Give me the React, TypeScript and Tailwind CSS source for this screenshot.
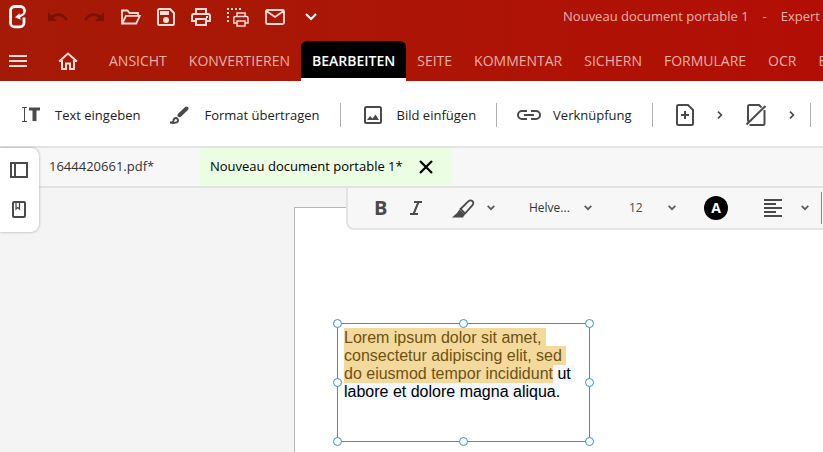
import type { ReactNode } from "react";

function Icon({ w, h, className = "", children }: { w: number; h: number; className?: string; children: ReactNode }) {
  return (
    <svg
      width={w}
      height={h}
      viewBox={`0 0 ${w} ${h}`}
      fill="none"
      stroke="currentColor"
      strokeWidth={2}
      className={`shrink-0 ${className}`}
      aria-hidden="true"
    >
      {children}
    </svg>
  );
}

const Logo = () => (
  <Icon w={18} h={24} className="text-white">
    <path
      strokeWidth={2.8}
      d="M15 12.500V17.800a4 4 0 0 1-4 4H5.500a4 4 0 0 1-4-4V5.500A4 4 0 0 1 5.500 1.500h6A4 4 0 0 1 15.500 5.500V6.500"
    />
    <path strokeWidth={2.2} d="M15.800 6c0 3-2.300 4.500-6.500 5.800" />
    <path d="M6 12.200l4.500-4 1.200 6.600z" fill="currentColor" stroke="none" />
  </Icon>
);

const Undo = () => (
  <Icon w={20} h={10}>
    <path d="M0 0v9h9L5.700 5.700C8.500 3.200 14 2.800 17.600 8.600L20 7.700C15.500-.2 8 .2 3.600 3.600z" fill="currentColor" stroke="none" />
  </Icon>
);

const Redo = () => (
  <Icon w={20} h={10}>
    <path d="M20 0v9h-9l3.300-3.300C11.500 3.200 6 2.800 2.400 8.600L0 7.700C4.500-.2 12 .2 16.400 3.600z" fill="currentColor" stroke="none" />
  </Icon>
);

const FolderOpen = () => (
  <Icon w={20} h={16}>
    <path strokeWidth={1.800} d="M1 14.500V1.500h5.500l2 2.500H17v3M1.200 14.500L5 6.800h13.800l-3.600 7.700z" />
  </Icon>
);

const Save = () => (
  <Icon w={18} h={18}>
    <path d="M1 2.500Q1 1 2.500 1H13l4 4v10.500q0 1.500-1.500 1.500h-13Q1 17 1 15.500z" />
    <path d="M3 3h9v4H3z" fill="currentColor" stroke="none" />
    <circle cx={9} cy={12} r={3} fill="currentColor" stroke="none" />
  </Icon>
);

const Printer = () => (
  <Icon w={20} h={18}>
    <path d="M5 5V1h10v4M5 13H1V8q0-2 2-2h14q2 0 2 2v5h-4M5 11h10v6H5z" />
    <path d="M15 8h2v2h-2z" fill="currentColor" stroke="none" />
  </Icon>
);

const PrintArea = () => (
  <Icon w={22} h={19}>
    <path d="M0 1h14" strokeDasharray="2 2" />
    <path d="M1 4v12" strokeDasharray="2 2" />
    <path strokeWidth={1.500} d="M10 8V5h8v3M10 15H6.800v-5q0-1.500 1.500-1.500h11.200q1.500 0 1.500 1.500v5H18M10 13h8v5h-8z" />
  </Icon>
);

const Mail = () => (
  <Icon w={20} h={16}>
    <path strokeWidth={1.800} d="M1 2.500Q1 1 2.500 1h15Q19 1 19 2.500v11q0 1.500-1.500 1.500h-15Q1 15 1 13.500zM2 2.500l8 5.500 8-5.500" />
  </Icon>
);

const ChevronDown = ({ big = false }: { big?: boolean }) =>
  big ? (
    <Icon w={12} h={8}>
      <path d="M1 1l5 5 5-5" />
    </Icon>
  ) : (
    <Icon w={8} h={6} className="text-[#5c5c5c]">
      <path strokeWidth={1.700} d="M.700 .800L4 4.200 7.300.800" />
    </Icon>
  );

const ChevronRight = () => (
  <Icon w={6} h={8}>
    <path strokeWidth={1.700} d="M1 .700L4.400 4 1 7.300" />
  </Icon>
);

const Menu = () => (
  <Icon w={18} h={12}>
    <path d="M0 1h18M0 6h18M0 11h18" />
  </Icon>
);

const Home = () => (
  <Icon w={20} h={18}>
    <path d="M1 9.500l9-8 9 8M4 8v9h4v-5.500h4V17h4V8" />
  </Icon>
);

const TextInsert = () => (
  <Icon w={18} h={15}>
    <path strokeWidth={1} d="M0 .5h5M2.500 1v13M0 14.500h5" />
    <path strokeWidth={3} d="M7 2h11" />
    <path strokeWidth={4} d="M12.500 2v12" />
  </Icon>
);

const Brush = () => (
  <Icon w={19} h={18}>
    <path strokeWidth={4} strokeLinecap="round" d="M9.500 9.200L16.500 2.500" />
    <path d="M2 16.500q1.600-.7 1.600-2.200a2.200 2.200 0 1 1 2 2.200Q4 17.500 0 16.500z" />
  </Icon>
);

const Picture = () => (
  <Icon w={18} h={18}>
    <rect x={1} y={1} width={16} height={16} rx={1.500} />
    <path d="M3 14l3-4 2.500 2.500L11.500 8.500 15 14z" fill="currentColor" stroke="none" />
  </Icon>
);

const Link = () => (
  <Icon w={24} h={10}>
    <path d="M10 1H5a4 4 0 0 0 0 8h5M14 1h5a4 4 0 0 1 0 8h-5M7 5h10" />
  </Icon>
);

const PageAdd = () => (
  <Icon w={18} h={22}>
    <path d="M1 2.500Q1 1 2.500 1H12l5 5v13.500q0 1.500-1.500 1.500h-13Q1 21 1 19.500zM5 11h8M9 7v8" />
  </Icon>
);

const PageRemove = () => (
  <Icon w={20} h={22}>
    <path d="M2 17.500V2.500Q2 1 3.500 1H13l2.500 2.500M18.500 6v13.500q0 1.500-1.500 1.500H3.500M.500 20.500L19.500 2" />
  </Icon>
);

const Sidebar = () => (
  <Icon w={18} h={16}>
    <path d="M1 1h16v14H1zM5 1v14" />
  </Icon>
);

const Bookmark = () => (
  <Icon w={14} h={17}>
    <rect x={1} y={1} width={12} height={15} rx={1} />
    <path strokeWidth={1.300} d="M4 1.500V8l1.800-1.500L7.500 8V1.500" />
  </Icon>
);

const Close = () => (
  <Icon w={14} h={14}>
    <path strokeWidth={2.200} d="M1 1l12 12M13 1L1 13" />
  </Icon>
);

const Italic = () => (
  <Icon w={12} h={14}>
    <path d="M4 1h8M0 13h8M8.500 1l-5 12" />
  </Icon>
);

const Highlighter = () => (
  <Icon w={23} h={19}>
    <path strokeWidth={1.800} d="M8.500 10L16.500 2.200q2-1.600 4 0 1.600 1.800 0 4L13 14.500z" />
    <path d="M7.500 10.500l5.500 5-2 3H0l5-4.500z" fill="currentColor" stroke="none" />
  </Icon>
);

const AlignLeft = () => (
  <Icon w={18} h={18}>
    <path d="M0 1h18M0 5h12M0 9h18M0 13h12M0 17h18" />
  </Icon>
);

const quick = [
  { label: "Öffnen", icon: <FolderOpen /> },
  { label: "Speichern", icon: <Save /> },
  { label: "Drucken", icon: <Printer /> },
  { label: "Bereich drucken", icon: <PrintArea /> },
  { label: "E-Mail", icon: <Mail /> },
];

const menus = ["ANSICHT", "KONVERTIEREN", "BEARBEITEN", "SEITE", "KOMMENTAR", "SICHERN", "FORMULARE", "OCR", "E"];

const Divider = ({ className = "" }: { className?: string }) => (
  <span className={`h-6 w-px shrink-0 bg-[#b0b0b0] ${className}`} />
);

function Tool({ icon, label, gap = "gap-[15px]" }: { icon: ReactNode; label: string; gap?: string }) {
  return (
    <button type="button" className={`flex shrink-0 items-center text-[#4a4a4a] ${gap}`}>
      {icon}
      <span className="text-[13px] leading-5 font-medium text-[#222]">{label}</span>
    </button>
  );
}

function Handle({ className }: { className: string }) {
  return <span className={`absolute size-[9px] rounded-full border border-[#3a8fd0] bg-white ${className}`} />;
}

export default function App() {
  return (
    <div className="flex min-h-screen flex-col overflow-hidden bg-[#f4f4f4] font-['Open_Sans','Noto_Sans',sans-serif] whitespace-nowrap">
      <header className="bg-linear-to-r from-[#a51a06] to-[#b30e05]">
        <div className="flex h-[34px] items-center pl-[9px] text-[#fbdcd8]">
          <Logo />
          <button type="button" aria-label="Rückgängig" className="ml-[21px] text-[#7a1204]"><Undo /></button>
          <button type="button" aria-label="Wiederholen" className="ml-4 text-[#7a1204]"><Redo /></button>
          <div className="ml-[17px] flex items-center gap-4">
            {quick.map((q) => (
              <button key={q.label} type="button" aria-label={q.label}>{q.icon}</button>
            ))}
            <button type="button" aria-label="Mehr" className="ml-1 text-white"><ChevronDown big /></button>
          </div>
          <p className="ml-auto flex gap-3.5 pr-[3px] text-[13px] text-[#eab0aa]">
            <span>Nouveau document portable 1</span>
            <span>-</span>
            <span>Expert</span>
          </p>
        </div>
        <nav className="flex h-[47px] items-end pl-[9px] text-[#fbdcd8]">
          <button type="button" aria-label="Menü" className="flex h-10 shrink-0 items-center"><Menu /></button>
          <button type="button" aria-label="Start" className="ml-[31px] flex h-10 w-5 shrink-0 items-center"><Home /></button>
          <div className="ml-5 flex">
            {menus.map((m) => (
              <a
                key={m}
                href="#"
                className={
                  m === "BEARBEITEN"
                    ? "h-10 shrink-0 rounded-t-md border-b-3 border-white bg-black px-[11px] text-sm leading-10 font-semibold text-white"
                    : "h-10 shrink-0 px-[11px] text-sm leading-10 text-[#eab0aa]"
                }
              >
                {m}
              </a>
            ))}
          </div>
        </nav>
      </header>

      <div className="flex h-[67px] items-center border-b-2 border-[#e3e3e3] bg-white pt-0.5 pl-[22px]">
        <Tool icon={<TextInsert />} label="Text eingeben" />
        <span className="w-[30px] shrink-0" />
        <Tool icon={<Brush />} label="Format übertragen" />
        <div className="ml-5 flex items-center gap-[23px]">
          <Divider />
          <Tool icon={<Picture />} label="Bild einfügen" />
        </div>
        <div className="ml-5 flex items-center gap-5">
          <Divider />
          <Tool icon={<Link />} label="Verknüpfung" gap="gap-3" />
        </div>
        <div className="ml-5 flex items-center gap-[23px] text-[#4a4a4a]">
          <Divider />
          <button type="button" aria-label="Seite hinzufügen" className="flex items-center gap-[23px]"><PageAdd /><ChevronRight /></button>
          <button type="button" aria-label="Seite löschen" className="flex items-center gap-[23px]"><PageRemove /><ChevronRight /></button>
          <Divider className="-ml-2" />
        </div>
      </div>

      <div className="relative flex flex-1 flex-col">
        <div className="flex h-10 border-b-2 border-[#e3e3e3] bg-[#f7f7f7] pl-[49px] text-[13px] leading-9">
          <button type="button" className="w-[151px] pb-0.5 text-left text-[#333]">1644420661.pdf*</button>
          <div className="flex w-[252px] items-center gap-4 bg-[#ebfde2] pl-2.5 text-black">
            <button type="button" className="pb-0.5">Nouveau document portable 1*</button>
            <button type="button" aria-label="Schließen"><Close /></button>
          </div>
        </div>

        <main className="relative flex flex-1 pt-[19px] pl-[294px]">
          <div className="relative min-h-[245px] flex-1 border-t border-l border-[#b5b5b5] bg-white">
            <div className="absolute top-[115px] left-[42px] h-[119px] w-[253px] border border-[#3a8fd0] pt-[5px] pl-1.5 font-['Liberation_Sans',Arial,sans-serif] text-base leading-[18px] text-black">
              <p>
                <mark className="bg-[#f3d99b] py-px text-[#6d5214]">
                  Lorem ipsum dolor sit amet,&nbsp;
                  <br />
                  consectetur adipiscing elit, sed&nbsp;
                  <br />
                  do eiusmod tempor incididunt
                </mark>
                <span className="bg-[#f2f8fd]">
                  {" "}ut&nbsp;
                  <br />
                  labore et dolore magna aliqua.
                </span>
              </p>
              <Handle className="-top-[5px] -left-[5px]" />
              <Handle className="-top-[5px] left-[121px]" />
              <Handle className="-top-[5px] -right-[5px]" />
              <Handle className="top-[54px] -left-[5px]" />
              <Handle className="top-[54px] -right-[5px]" />
              <Handle className="-bottom-[5px] -left-[5px]" />
              <Handle className="-bottom-[5px] left-[121px]" />
              <Handle className="-right-[5px] -bottom-[5px]" />
            </div>
          </div>

          <div className="absolute top-0 right-0 left-[346px] flex h-[42px] items-center rounded-bl-lg border-b-2 border-l-2 border-[#e3e3e3] bg-[#f7f7f7] pl-[26px] text-xs text-[#4a4a4a]">
            <button type="button" aria-label="Fett" className="w-3 text-xl leading-5 font-bold">B</button>
            <button type="button" aria-label="Kursiv" className="ml-6"><Italic /></button>
            <button type="button" aria-label="Hervorheben" className="ml-[30px] flex items-center gap-3"><Highlighter /><ChevronDown /></button>
            <button type="button" aria-label="Schriftart" className="ml-[34px] flex w-[63px] items-center justify-between text-[#333]"><span>Helve...</span><ChevronDown /></button>
            <button type="button" aria-label="Schriftgröße" className="ml-[37px] flex w-[47px] items-center justify-between"><span>12</span><ChevronDown /></button>
            <button type="button" aria-label="Schriftfarbe" className="ml-7 size-6 rounded-full bg-black text-sm leading-6 font-bold text-white">A</button>
            <button type="button" aria-label="Ausrichtung" className="ml-9 flex items-center gap-[19px]"><AlignLeft /><ChevronDown /></button>
            <span className="ml-3 h-8 w-px bg-[#888]" />
          </div>
        </main>

        <aside className="absolute top-0 left-0 flex h-[84px] w-[39px] flex-col items-center justify-between rounded-r-lg bg-white py-3.5 pr-px text-[#4a4a4a] shadow-[0_0_3px_rgba(0,0,0,0.35)]">
          <button type="button" aria-label="Seitenleiste"><Sidebar /></button>
          <button type="button" aria-label="Lesezeichen"><Bookmark /></button>
        </aside>
      </div>
    </div>
  );
}
